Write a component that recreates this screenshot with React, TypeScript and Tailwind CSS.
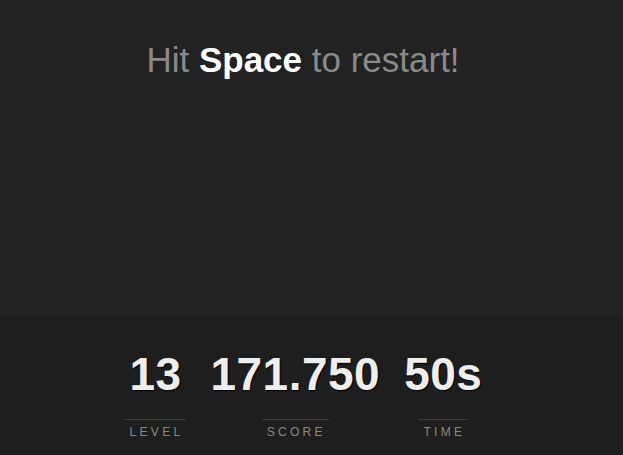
import React from "react";

const stats = [
  { value: "13", label: "LEVEL" },
  { value: "171.750", label: "SCORE" },
  { value: "50s", label: "TIME" },
];

export default function App() {
  return (
    <div
      className="w-[623px] h-[455px] flex flex-col bg-[#222222] overflow-hidden"
      style={{ fontFamily: '"Liberation Sans", Arial, sans-serif' }}
    >
      <div className="h-[317px] pr-[17px] flex justify-center">
        <div className="mt-[42px] text-[35px] leading-none text-[#8a8a8a] whitespace-nowrap">
          Hit <span className="font-bold text-white">Space</span> to restart!
        </div>
      </div>
      <div className="flex-1 bg-[#1e1e1e] pr-[16px] flex justify-center items-start gap-6 pt-[34px]">
        {stats.map((s) => (
          <div key={s.label} className="flex flex-col items-center">
            <div className="text-[46px] leading-none font-bold tracking-[0.5px] text-[#eeeeee] [text-shadow:1px_1px_1px_#000] whitespace-nowrap">
              {s.value}
            </div>
            <div className="mt-[22px] border-t border-[#3e3e3e] pt-[6px] pl-[5px] pr-[3px] text-[12px] leading-none tracking-[3.3px] text-[#868b80]">
              {s.label}
            </div>
          </div>
        ))}
      </div>
    </div>
  );
}
